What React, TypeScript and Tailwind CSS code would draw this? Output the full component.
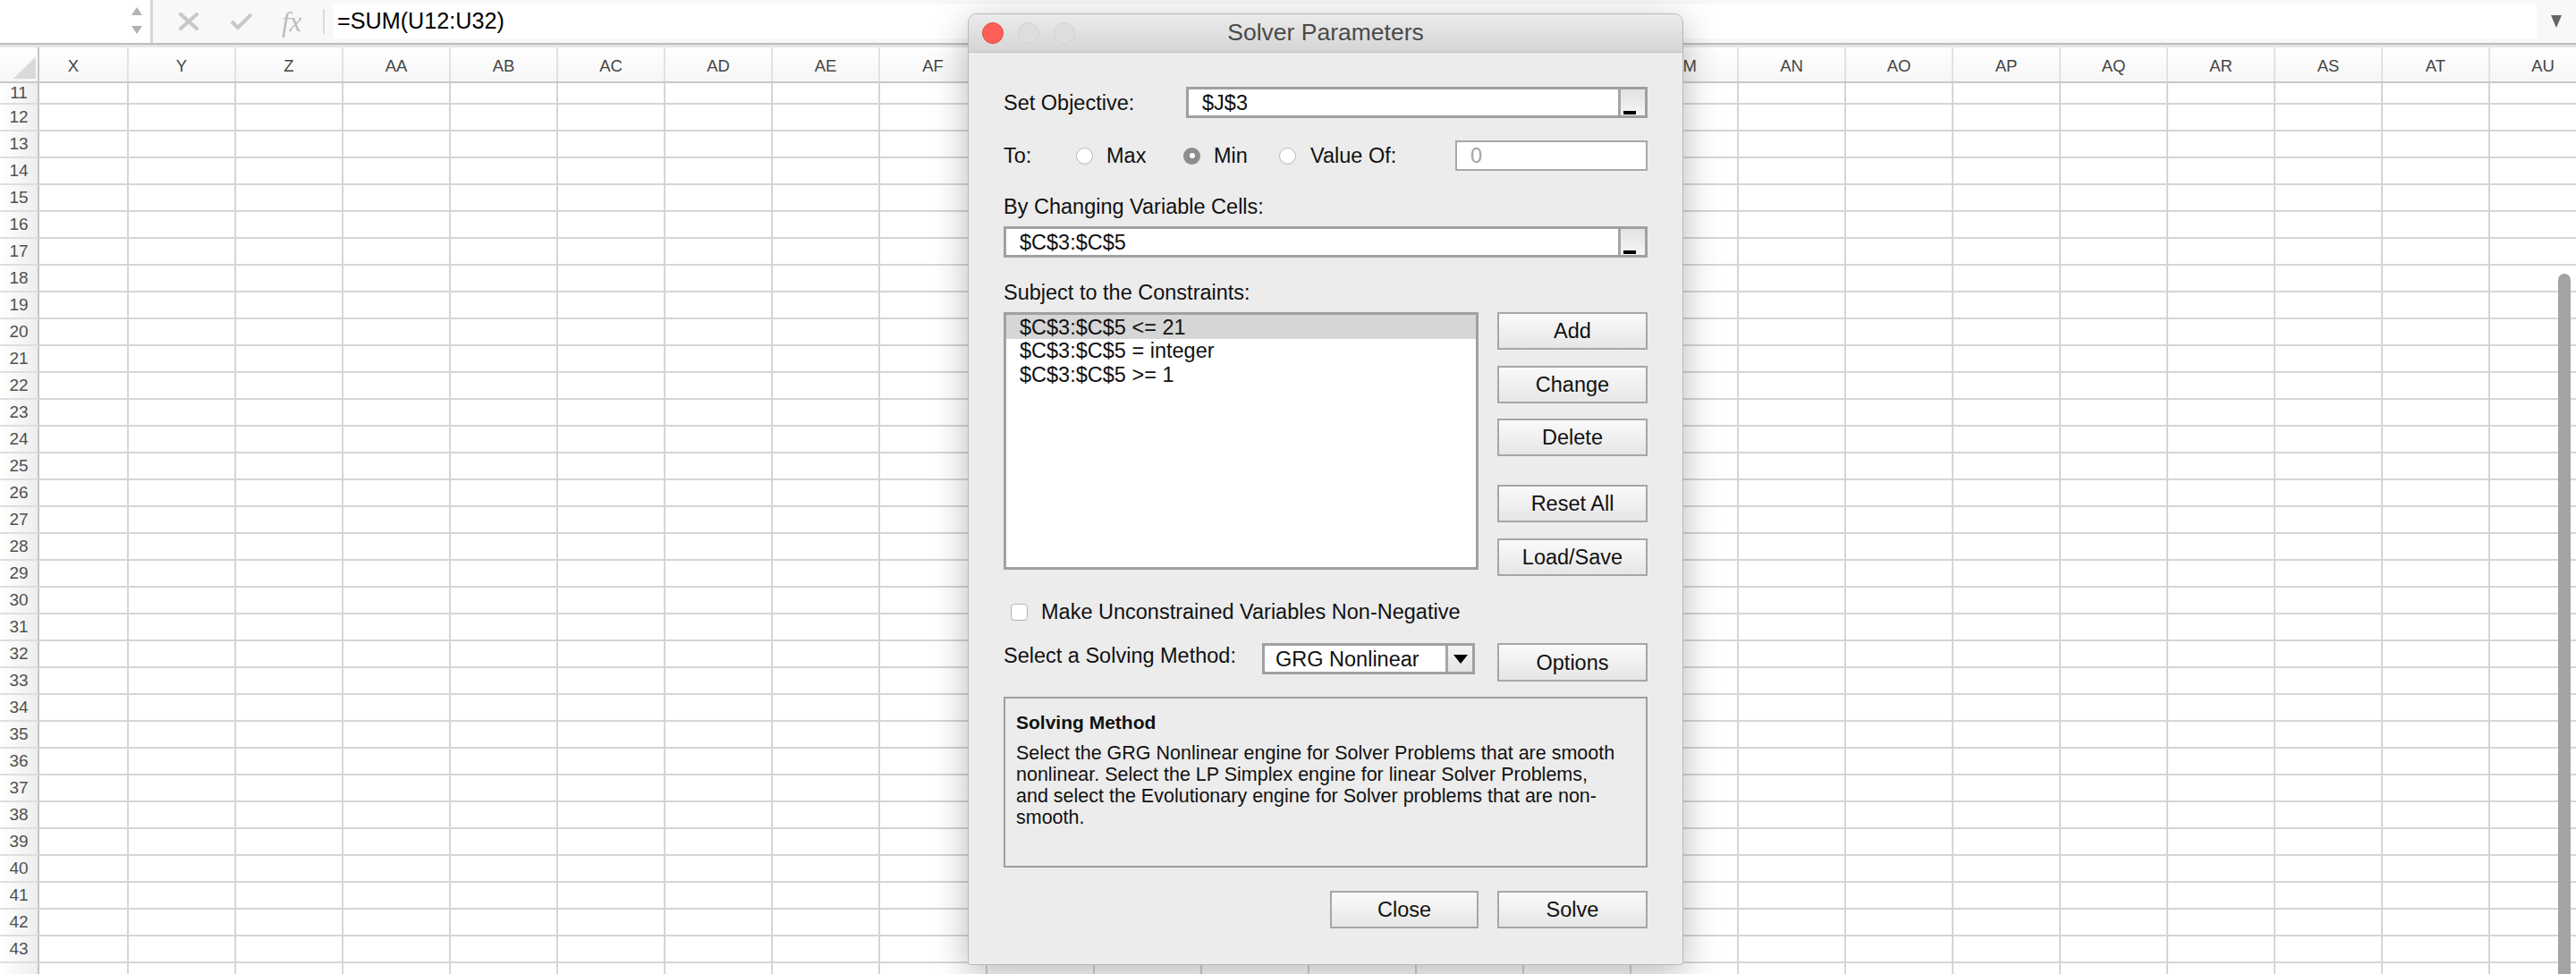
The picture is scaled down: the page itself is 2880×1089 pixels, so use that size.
import React from 'react';

const COLS = ['X','Y','Z','AA','AB','AC','AD','AE','AF','AG','AH','AI','AJ','AK','AL','AM','AN','AO','AP','AQ','AR','AS','AT','AU'];
const ROWS = Array.from({ length: 34 }, (_, i) => 11 + i);

function FormulaBar() {
  return (
    <div className="flex h-[50px] shrink-0 border-b-2 border-[#bdbdbd] bg-[#f8f8f8]">
      <div className="flex w-[168px] shrink-0 items-center justify-end bg-white pr-[8px]">
        <svg width="14" height="32" viewBox="0 0 14 32">
          <polygon points="7,0 13,9 1,9" fill="#b4b4b4" />
          <polygon points="1,21 13,21 7,30" fill="#b4b4b4" />
        </svg>
      </div>
      <div className="w-[3px] shrink-0 bg-[#d6d6d6]" />
      <div className="flex shrink-0 items-center">
        <svg className="ml-[29px]" width="22" height="20" viewBox="0 0 22 20">
          <path d="M2 2 L20 18 M20 2 L2 18" stroke="#c8c8c8" strokeWidth="4" strokeLinecap="square" />
        </svg>
        <svg className="ml-[35px]" width="26" height="20" viewBox="0 0 26 20">
          <path d="M2 10 L9 17 L24 2" stroke="#c8c8c8" strokeWidth="4" fill="none" />
        </svg>
        <span className="ml-[32px] w-[28px] text-[31px] italic leading-none text-[#bcbcbc]" style={{ fontFamily: '"Liberation Serif", serif' }}>fx</span>
        <div className="ml-[18px] h-[28px] w-[2px] bg-[#dcdcdc]" />
      </div>
      <div className="my-[5px] ml-[9px] flex flex-1 items-center bg-white pl-[5px] text-[25.2px] text-black">
        =SUM(U12:U32)
      </div>
      <div className="flex w-[44px] shrink-0 items-center justify-center">
        <svg width="12" height="14" viewBox="0 0 12 14">
          <polygon points="0,0 12,0 6,14" fill="#666" />
        </svg>
      </div>
    </div>
  );
}

function Grid() {
  return (
    <div className="flex flex-col">
      <div className="flex h-[43px] shrink-0 border-t-[3px] border-b-2 border-t-[#e6e6e6] border-b-[#c9c9c9] bg-gradient-to-b from-white to-[#f6f6f6]">
        <div className="w-[44px] shrink-0 border-r-2 border-[#c4c4c4]">
          <svg width="42" height="38" viewBox="0 0 42 38">
            <polygon points="40,10 15,35 40,35" fill="#d9d9d9" />
          </svg>
        </div>
        {COLS.map((c, i) => (
          <div
            key={c}
            className={
              i === 0
                ? 'flex w-[100px] shrink-0 items-center justify-center border-r-2 border-[#e2e2e2] pr-[22px] pt-[3px] text-[18.5px] text-[#454545]'
                : 'flex w-[120px] shrink-0 items-center justify-center border-r-2 border-[#e2e2e2] pt-[3px] text-[18.5px] text-[#454545]'
            }
          >
            {c}
          </div>
        ))}
      </div>
      {ROWS.map((r) => (
        <div key={r} className={r === 11 ? 'flex h-[24px] shrink-0' : 'flex h-[30px] shrink-0'}>
          <div className="flex w-[44px] shrink-0 items-center justify-center border-r-2 border-b-2 border-r-[#c4c4c4] border-b-[#dedede] bg-gradient-to-r from-white to-[#eeeeee] text-[19px] text-[#505050]">
            {r === 44 ? '' : r}
          </div>
          {COLS.map((c, i) => (
            <div
              key={c}
              className={
                i === 0
                  ? 'w-[100px] shrink-0 border-r-2 border-b-2 border-[#d5d5d5] bg-white'
                  : 'w-[120px] shrink-0 border-r-2 border-b-2 border-[#d5d5d5] bg-white'
              }
            />
          ))}
        </div>
      ))}
    </div>
  );
}

function MacButton({ label, w = 'w-[168px]', h = 'h-[42px]' }: { label: string; w?: string; h?: string }) {
  return (
    <div className={`${w} ${h} flex shrink-0 items-center justify-center border-2 border-[#a6a6a6] bg-gradient-to-b from-[#fafafa] to-[#e6e6e6] text-[23.5px] text-[#111]`}>
      {label}
    </div>
  );
}

function RefInput({ value }: { value: string }) {
  return (
    <div className="flex h-[35px] flex-1 border-[3px] border-[#a0a0a0] bg-white">
      <div className="flex flex-1 items-center pl-[15px] text-[23.5px] text-[#111]">{value}</div>
      <div className="relative w-[30px] border-l-[3px] border-[#a6a6a6] bg-gradient-to-b from-[#e2e2e2] to-[#f6f6f6]">
        <div className="absolute bottom-[1px] left-[3px] h-[4px] w-[14px] bg-black" />
      </div>
    </div>
  );
}

function Radio({ selected }: { selected?: boolean }) {
  return selected ? (
    <div className="flex h-[19px] w-[19px] shrink-0 items-center justify-center rounded-full bg-[#8d8d8d]">
      <div className="h-[6px] w-[6px] rounded-full bg-white" />
    </div>
  ) : (
    <div className="h-[19px] w-[19px] shrink-0 rounded-full border border-[#b9b9b9] bg-white shadow-[inset_0_-1px_1px_rgba(0,0,0,0.06)]" />
  );
}

function Dialog() {
  return (
    <div
      className="absolute left-[1082px] top-[15px] flex h-[1064px] w-[800px] flex-col overflow-hidden rounded-t-[10px] rounded-b-[3px] border border-[#b8b8b8] bg-[#ececec] shadow-[0_10px_40px_rgba(0,0,0,0.28)]"
      style={{ fontFamily: '"Liberation Sans", Arial, sans-serif' }}
    >
      <div className="relative flex h-[43px] shrink-0 items-center justify-center border-b border-[#c2c2c2] bg-gradient-to-b from-[#ebebeb] to-[#d5d5d5]">
        <div className="absolute left-[15px] top-[9px] flex gap-[16px]">
          <div className="h-[24px] w-[24px] rounded-full border border-[#e2463f] bg-[#fe5f57]" />
          <div className="h-[24px] w-[24px] rounded-full border border-[#d0d0d0] bg-[#dedede]" />
          <div className="h-[24px] w-[24px] rounded-full border border-[#d0d0d0] bg-[#dedede]" />
        </div>
        <span className="text-[26.5px] text-[#4a4a4a]">Solver Parameters</span>
      </div>

      <div className="flex flex-col px-[39px] text-[23.5px] leading-[28px] text-[#111]">
        <div className="mt-[38px] flex h-[35px] items-center">
          <div className="w-[204px] shrink-0">Set Objective:</div>
          <RefInput value="$J$3" />
        </div>

        <div className="mt-[25px] flex h-[34px] items-center">
          <div className="w-[81px] shrink-0">To:</div>
          <div className="flex w-[120px] shrink-0 items-center">
            <Radio />
            <span className="ml-[15px]">Max</span>
          </div>
          <div className="flex w-[107px] shrink-0 items-center">
            <Radio selected />
            <span className="ml-[15px]">Min</span>
          </div>
          <div className="flex flex-1 items-center">
            <Radio />
            <span className="ml-[16px]">Value Of:</span>
          </div>
          <div className="flex h-[34px] w-[215px] items-center border-2 border-[#a8a8a8] bg-white pl-[15px] text-[#a3a3a3]">0</div>
        </div>

        <div className="mt-[26px]">By Changing Variable Cells:</div>
        <div className="mt-[8px] flex">
          <RefInput value="$C$3:$C$5" />
        </div>

        <div className="mt-[25px]">Subject to the Constraints:</div>
        <div className="mt-[8px] flex items-start">
          <div className="h-[288px] w-[531px] shrink-0 border-[3px] border-[#a0a0a0] bg-white">
            <div className="flex h-[27px] items-center bg-[#d6d6d6] pl-[15px]">$C$3:$C$5 &lt;= 21</div>
            <div className="flex h-[26px] items-center pl-[15px]">$C$3:$C$5 = integer</div>
            <div className="flex h-[27px] items-center pl-[15px]">$C$3:$C$5 &gt;= 1</div>
          </div>
          <div className="ml-[21px] flex flex-col">
            <MacButton label="Add" />
            <div className="mt-[18px]"><MacButton label="Change" /></div>
            <div className="mt-[17px]"><MacButton label="Delete" /></div>
            <div className="mt-[32px]"><MacButton label="Reset All" /></div>
            <div className="mt-[18px]"><MacButton label="Load/Save" /></div>
          </div>
        </div>

        <div className="mt-[26px] flex h-[28px] items-center">
          <div className="ml-[8px] h-[19px] w-[19px] rounded-[4px] border border-[#b4b4b4] bg-white shadow-[inset_0_-1px_1px_rgba(0,0,0,0.05)]" />
          <span className="ml-[15px]">Make Unconstrained Variables Non-Negative</span>
        </div>

        <div className="mt-[21px] flex items-start">
          <div className="w-[289px] shrink-0">Select a Solving Method:</div>
          <div className="flex h-[35px] w-[238px] shrink-0 border-[3px] border-[#a0a0a0] bg-white">
            <div className="flex flex-1 items-center pl-[12px]">GRG Nonlinear</div>
            <div className="flex w-[30px] items-center justify-center border-l-[3px] border-[#a6a6a6] bg-gradient-to-b from-[#f4f4f4] to-[#e4e4e4]">
              <svg width="16" height="10" viewBox="0 0 16 10">
                <polygon points="0,0 16,0 8,10" fill="#000" />
              </svg>
            </div>
          </div>
          <div className="ml-[25px]"><MacButton label="Options" h="h-[43px]" /></div>
        </div>

        <div className="mt-[17px] flex h-[191px] flex-col border-2 border-[#9e9e9e] bg-[#ececec] pl-[12px] pt-[15px] text-[21.5px] leading-[24px]">
          <div className="whitespace-nowrap text-[21px] font-bold">Solving Method</div>
          <div className="mt-[10px] whitespace-nowrap">
            <div>Select the GRG Nonlinear engine for Solver Problems that are smooth</div>
            <div>nonlinear. Select the LP Simplex engine for linear Solver Problems,</div>
            <div>and select the Evolutionary engine for Solver problems that are non-</div>
            <div>smooth.</div>
          </div>
        </div>

        <div className="mt-[26px] flex justify-end gap-[21px]">
          <MacButton label="Close" w="w-[166px]" />
          <MacButton label="Solve" />
        </div>
      </div>
    </div>
  );
}

export default function App() {
  return (
    <div
      className="relative h-[1089px] w-[2880px] overflow-hidden bg-white"
      style={{ fontFamily: '"Liberation Sans", Arial, sans-serif' }}
    >
      <FormulaBar />
      <Grid />
      <div className="absolute left-[2860px] top-[306px] h-[820px] w-[14px] rounded-full bg-[#a3a3a3]" />
      <Dialog />
    </div>
  );
}
